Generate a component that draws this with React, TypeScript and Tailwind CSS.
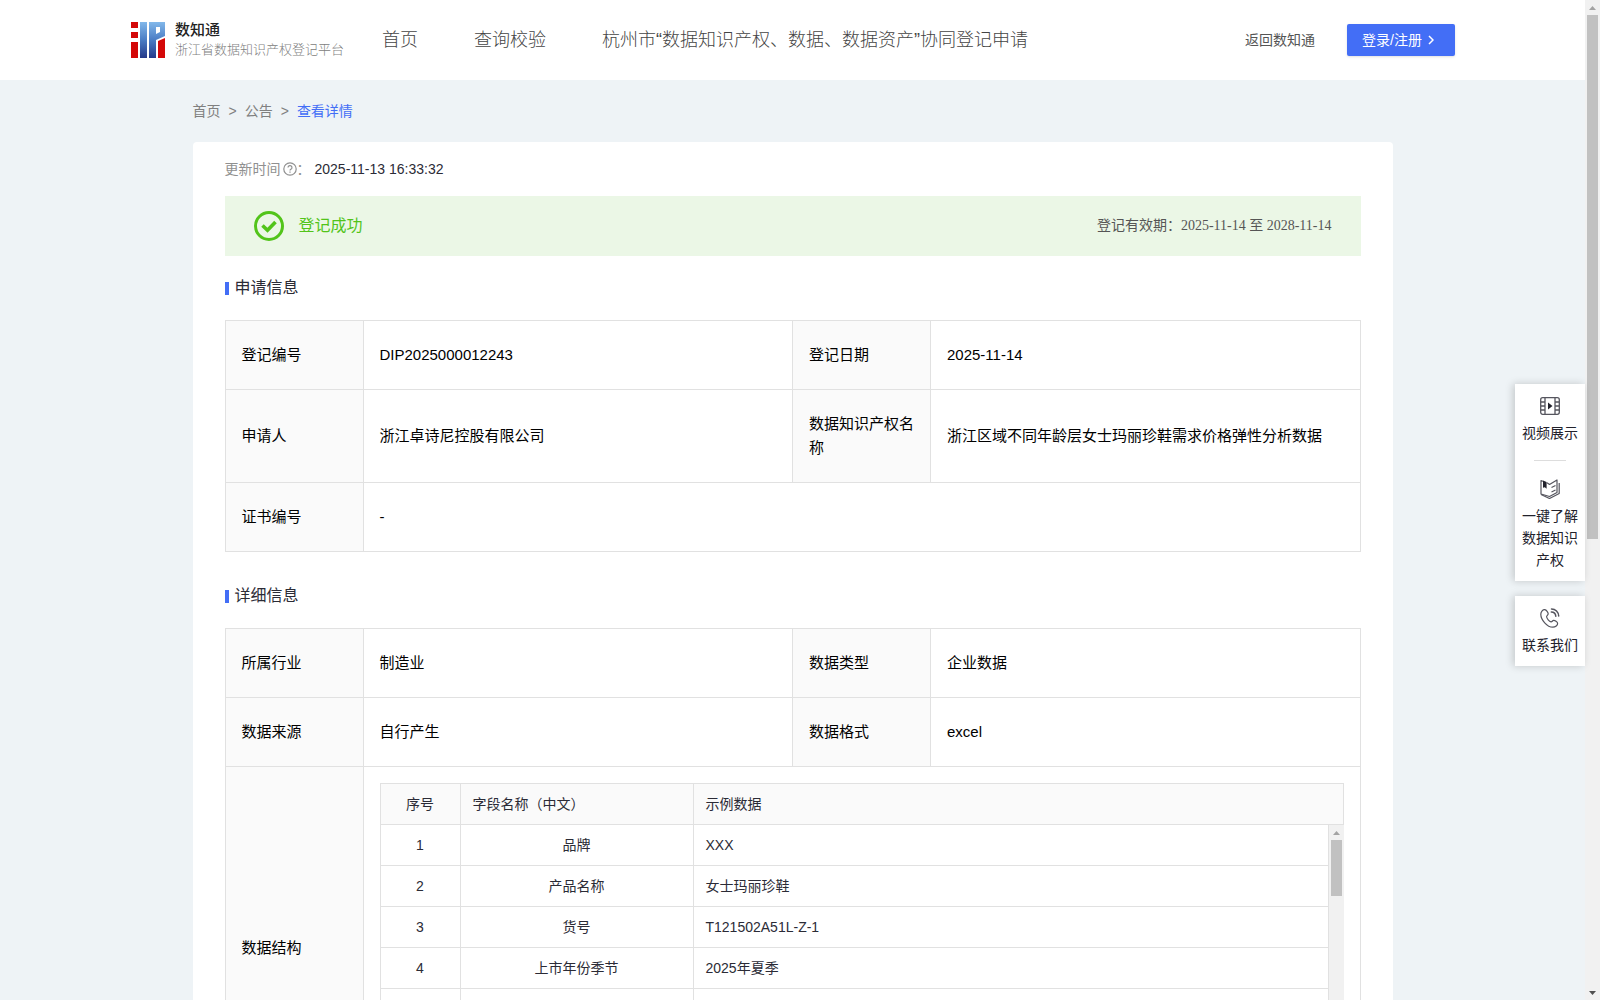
import React from 'react';

interface FieldRow {
  id: number;
  name?: string;
  sample?: string;
}

const navItems = ['首页', '查询校验', '杭州市“数据知识产权、数据、数据资产”协同登记申请'];

// Rows without a name are still empty in the list
const fieldRows: FieldRow[] = [
  { id: 1, name: '品牌', sample: 'XXX' },
  { id: 2, name: '产品名称', sample: '女士玛丽珍鞋' },
  { id: 3, name: '货号', sample: 'T121502A51L-Z-1' },
  { id: 4, name: '上市年份季节', sample: '2025年夏季' },
  { id: 5 },
  { id: 6 },
  { id: 7 },
];

function Logo() {
  return (
    <svg width="34" height="36" viewBox="0 0 34 36" aria-hidden="true">
      <defs>
        <linearGradient id="logoBlue" x1="0" y1="0" x2="0" y2="1">
          <stop offset="0" stopColor="#82b8ea" />
          <stop offset="0.5" stopColor="#4a7cc4" />
          <stop offset="1" stopColor="#253a8a" />
        </linearGradient>
      </defs>
      <path d="M0 0h7v6H0zM0 10h7v6H0zM0 20h7v16H0z" fill="#d40808" />
      <path d="M27 19l7-3v20h-7z" fill="#d40808" />
      <path d="M9 0h7v36H9z" fill="url(#logoBlue)" />
      <path d="M18 0h16v14l-9 4v18h-7zM25 5v7l4-2V5z" fill="url(#logoBlue)" fillRule="evenodd" />
    </svg>
  );
}

function VideoIcon() {
  return (
    <svg width="20" height="20" viewBox="0 0 20 20" fill="none" stroke="#55555e" strokeWidth="1.3" aria-hidden="true">
      <rect x="0.7" y="1.7" width="18.6" height="16.6" rx="2" />
      <path d="M5 2v16M15 2v16M1 6h4M1 10h4M1 14h4M15 6h4M15 10h4M15 14h4" />
      <path d="M8 6.5v7l4.5-3.5z" fill="#22222c" stroke="none" />
    </svg>
  );
}

function BookIcon() {
  return (
    <svg width="20" height="20" viewBox="0 0 20 20" fill="none" stroke="#55555e" strokeWidth="1.2" strokeLinejoin="round" aria-hidden="true">
      <path d="M9.500 5.500L17 1v12.500l-7.500 4L1 15V1.500l2 .7M7 3.800l2.500 1.700" />
      <path d="M1 15.500l8.500 4 9.700-5V4" />
      <path d="M11.500 8.500l4-2M11.500 13l4-2" />
      <path d="M3 1.600l3.600 1.400v6.800L4.800 8.200 3 8.800z" fill="#22222c" stroke="none" />
    </svg>
  );
}

function PhoneIcon() {
  return (
    <svg width="20" height="20" viewBox="0 0 20 20" fill="none" stroke="#55555e" strokeWidth="1.2" strokeLinecap="round" strokeLinejoin="round" aria-hidden="true">
      <path d="M4.800 1.600C3 1.300 .8 3.600 .8 6.200c0 5.600 6.400 13 12 13 2.600 0 5-2 4.800-4 -.1-1.200-2.800-3-4-2.800-1.200.2-1.600 1.600-2.600 1.400-1.800-.4-4.200-3.200-4.400-5 -.1-1.200 1.600-1.600 1.600-3C8.200 4.400 6.400 1.900 4.800 1.600z" />
      <path d="M11.500 1c4 0 7 3 7.200 7M11.300 4c2.600 0 4.300 1.800 4.500 4.300" strokeWidth="1.500" />
    </svg>
  );
}

// Scroll track with its arrows; the thumb height is set by the caller
function ScrollBar({ thumbClass, showDown }: { thumbClass: string; showDown?: boolean }) {
  return (
    <div className="flex w-[15px] shrink-0 flex-col items-center bg-[#f1f1f1]" aria-hidden="true">
      <div className="flex h-[15px] items-center">
        <svg width="7" height="4" viewBox="0 0 7 4"><path d="M3.500 0L7 4H0z" fill="#a3a3a3" /></svg>
      </div>
      <div className={`w-[11px] bg-[#c1c1c1] ${thumbClass}`}></div>
      {showDown && (
        <div className="mt-auto flex h-[15px] items-center">
          <svg width="7" height="4" viewBox="0 0 7 4"><path d="M0 0h7L3.500 4z" fill="#505050" /></svg>
        </div>
      )}
    </div>
  );
}

function SectionTitle({ children }: { children: React.ReactNode }) {
  return (
    <h2 className="flex items-center text-base leading-6 text-[#2b2b36]">
      <span className="mr-1.5 h-[13px] w-1 bg-[#436ef6]"></span>
      {children}
    </h2>
  );
}

function Label({ children }: { children: React.ReactNode }) {
  return (
    <th scope="row" className="border border-[#e1e1e1] bg-[#fafafa] px-4 py-[22px] text-left font-normal">
      {children}
    </th>
  );
}

function Value({ children, colSpan }: { children: React.ReactNode; colSpan?: number }) {
  return (
    <td colSpan={colSpan} className="border border-[#e1e1e1] px-4 py-[22px]">
      {children}
    </td>
  );
}

function InfoTable({ children }: { children: React.ReactNode }) {
  return (
    <table className="mt-5 w-full table-fixed border-collapse text-[15px] leading-6 text-black">
      <colgroup>
        <col className="w-[138px]" />
        <col />
        <col className="w-[138px]" />
        <col />
      </colgroup>
      <tbody>{children}</tbody>
    </table>
  );
}

function FieldTable() {
  return (
    <div className="text-sm text-[#2b2b36]">
      <table className="w-full table-fixed border-separate border-spacing-0 border-t border-l border-[#e1e1e1] bg-[#fafafa]">
        <thead>
          <tr>
            <th className="h-[41px] w-20 border-r border-b border-[#e1e1e1] px-3 font-normal">序号</th>
            <th className="w-[233px] border-r border-b border-[#e1e1e1] px-3 text-left font-normal">字段名称（中文）</th>
            <th className="border-r border-b border-[#e1e1e1] px-3 text-left font-normal">示例数据</th>
          </tr>
        </thead>
      </table>
      <div className="flex">
        <table className="min-w-0 flex-1 table-fixed border-separate border-spacing-0 border-l border-[#e1e1e1]">
          <tbody>
            {fieldRows.map((row) => (
              <tr key={row.id}>
                <td className="h-[41px] w-20 border-r border-b border-[#e1e1e1] px-3 text-center">{row.name && row.id}</td>
                <td className="w-[233px] border-r border-b border-[#e1e1e1] px-3 text-center">{row.name}</td>
                <td className="border-r border-b border-[#e1e1e1] px-3">{row.sample}</td>
              </tr>
            ))}
          </tbody>
        </table>
        <ScrollBar thumbClass="h-14" />
      </div>
    </div>
  );
}

function SideButton({ icon, label }: { icon: React.ReactNode; label: string }) {
  return (
    <button className="flex w-full flex-col items-center gap-1.5 px-[7px] text-sm leading-[22px] text-[#22222c]">
      {icon}
      <span>{label}</span>
    </button>
  );
}

export default function App() {
  return (
    <div className="relative flex h-screen bg-[#eef3f6] font-['Liberation_Sans','Noto_Sans_CJK_SC',sans-serif]">
      <div className="min-w-0 flex-1 overflow-y-auto [scrollbar-width:none]">
        <header className="flex h-20 items-center bg-white pr-[130px] pl-[131px] text-[#555555]">
          <a href="#" className="flex items-center gap-2.5">
            <Logo />
            <span className="flex flex-col">
              <span className="text-[15px] leading-5 font-medium text-[#222222]">数知通</span>
              <span className="text-[13px] leading-5 font-light text-[#808080]">浙江省数据知识产权登记平台</span>
            </span>
          </a>
          <nav className="ml-[38px] flex gap-14 text-lg font-light text-[#444444]">
            {navItems.map((item) => (
              <a key={item} href="#" className="whitespace-nowrap">{item}</a>
            ))}
          </nav>
          <a href="#" className="ml-auto text-sm">返回数知通</a>
          <button className="ml-8 flex h-8 w-[108px] items-center gap-1.5 rounded-xs bg-[#436ef6] pl-[15px] text-sm text-white shadow-sm">
            登录/注册
            <svg width="6" height="10" viewBox="0 0 6 10" fill="none" stroke="currentColor" strokeWidth="1.5" aria-hidden="true">
              <path d="M1 1l4 4-4 4" />
            </svg>
          </button>
        </header>

        <main className="mx-auto max-w-[1200px]">
          <div className="flex gap-2 py-5 text-sm leading-[22px] text-[#808080]">
            <a href="#">首页</a>
            <span>&gt;</span>
            <a href="#">公告</a>
            <span>&gt;</span>
            <a href="#" className="text-[#436ef6]">查看详情</a>
          </div>

          <div className="rounded bg-white px-8 pt-4 pb-8">
            <div className="flex items-center text-sm leading-[22px] text-[#909090]">
              更新时间
              <svg className="ml-0.5" width="14" height="14" viewBox="0 0 14 14" fill="none" stroke="currentColor" strokeWidth="1.2" aria-hidden="true">
                <circle cx="7" cy="7" r="6.200" />
                <path d="M5 5.600a2 2 0 1 1 2.800 1.800c-.6.3-.8.6-.8 1.200M7 9.600v1.200" />
              </svg>
              <span>：</span>
              <span className="ml-1 text-[#2b2b36]">2025-11-13 16:33:32</span>
            </div>

            {/* Registration status */}
            <div className="mt-4 flex h-15 items-center bg-[#ebf7e6] px-[29px]">
              <svg width="30" height="30" viewBox="0 0 30 30" fill="none" stroke="#52c41a" aria-hidden="true">
                <circle cx="15" cy="15" r="13.500" strokeWidth="3" />
                <path d="M8.500 14.500l5 4.800 8-8.300" strokeWidth="3.600" />
              </svg>
              <span className="ml-[15px] text-base text-[#52c41a]">登记成功</span>
              <span className="ml-auto font-['Liberation_Serif','Noto_Sans_CJK_SC',serif] text-sm text-[#555555]">
                登记有效期：2025-11-14 至 2028-11-14
              </span>
            </div>

            <section className="mt-5">
              <SectionTitle>申请信息</SectionTitle>
              <InfoTable>
                <tr>
                  <Label>登记编号</Label>
                  <Value>DIP2025000012243</Value>
                  <Label>登记日期</Label>
                  <Value>2025-11-14</Value>
                </tr>
                <tr>
                  <Label>申请人</Label>
                  <Value>浙江卓诗尼控股有限公司</Value>
                  <Label>数据知识产权名称</Label>
                  <Value>浙江区域不同年龄层女士玛丽珍鞋需求价格弹性分析数据</Value>
                </tr>
                <tr>
                  <Label>证书编号</Label>
                  <Value colSpan={3}>-</Value>
                </tr>
              </InfoTable>
            </section>

            <section className="mt-8">
              <SectionTitle>详细信息</SectionTitle>
              <InfoTable>
                <tr>
                  <Label>所属行业</Label>
                  <Value>制造业</Value>
                  <Label>数据类型</Label>
                  <Value>企业数据</Value>
                </tr>
                <tr>
                  <Label>数据来源</Label>
                  <Value>自行产生</Value>
                  <Label>数据格式</Label>
                  <Value>excel</Value>
                </tr>
                <tr>
                  <Label>数据结构</Label>
                  <td colSpan={3} className="border border-[#e1e1e1] p-4">
                    <FieldTable />
                  </td>
                </tr>
              </InfoTable>
            </section>
          </div>
        </main>
      </div>

      {/* Floating shortcuts */}
      <aside className="absolute top-96 right-[15px] flex w-[70px] flex-col gap-[15px]">
        <div className="bg-white pt-3 pb-2.5 shadow-[-2px_0_8px_rgba(0,0,0,0.18)]">
          <SideButton icon={<VideoIcon />} label="视频展示" />
          <hr className="mx-auto mt-4 mb-[18px] w-8 border-[#dddddd]" />
          <SideButton icon={<BookIcon />} label="一键了解数据知识产权" />
        </div>
        <div className="bg-white pt-3 pb-2.5 shadow-[-2px_0_8px_rgba(0,0,0,0.18)]">
          <SideButton icon={<PhoneIcon />} label="联系我们" />
        </div>
      </aside>

      <ScrollBar thumbClass="h-[524px]" showDown />
    </div>
  );
}
